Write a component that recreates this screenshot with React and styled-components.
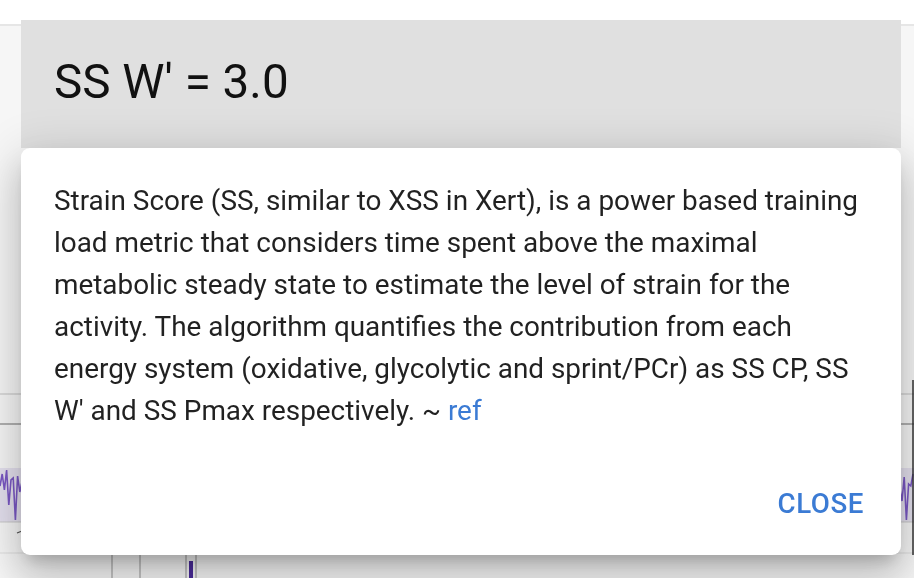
import React from "react";
import styled, { createGlobalStyle } from "styled-components";

const Global = createGlobalStyle`
  html, body { margin: 0; padding: 0; background: #ffffff; }
  body { font-family: Roboto, "Noto Sans", Arial, sans-serif; overflow: hidden; }
  #root { height: 578px; }
`;

const Page = styled.div`
  height: 578px;
  display: flex;
  flex-direction: column;
  padding-top: 24px;
  box-sizing: border-box;
`;

const Panel = styled.div`
  flex: 1;
  background: #f6f6f6;
  border-top: 2px solid #e6e6e6;
  display: flex;
  flex-direction: column;
`;

const ChartSvg = styled.svg`
  display: block;
  width: 100%;
  flex: 1;
`;

const Overlay = styled.div`
  position: fixed;
  left: 21px;
  top: 20px;
  width: 880px;
  height: 535px;
  display: flex;
  flex-direction: column;
`;

const Title = styled.div`
  height: 128px;
  flex: none;
  background: #e0e0e0;
  display: flex;
  align-items: center;
  padding: 0 33px 4px;
  box-sizing: border-box;
  font-size: 47.6px;
  font-weight: 400;
  color: #111;
  letter-spacing: 0;
`;

const Card = styled.div`
  position: relative;
  z-index: 1;
  flex: 1;
  background: #ffffff;
  border-radius: 9px;
  box-shadow: 0 11px 15px -7px rgba(0, 0, 0, 0.2),
    0 24px 38px 3px rgba(0, 0, 0, 0.14),
    0 9px 46px 8px rgba(0, 0, 0, 0.12);
  display: flex;
  flex-direction: column;
  padding: 32px 33px 27px;
  box-sizing: border-box;
`;

const Body = styled.p`
  margin: 0;
  font-size: 27.9px;
  line-height: 42px;
  color: rgba(0, 0, 0, 0.87);
  flex: 1;
`;

const Link = styled.a`
  color: #3b7bd4;
  text-decoration: none;
`;

const Actions = styled.div`
  display: flex;
  justify-content: flex-end;
`;

const CloseButton = styled.button`
  background: none;
  border: none;
  padding: 8px 4px 8px 5px;
  font-family: Roboto, "Noto Sans", Arial, sans-serif;
  font-weight: 500;
  font-size: 27.7px;
  letter-spacing: 0.02em;
  color: #3b7bd4;
  text-transform: uppercase;
  cursor: pointer;
`;

function Chart() {
  const wave = [];
  let x = 0;
  const seed = [486, 474, 490, 470, 505, 480, 478, 520, 476, 492, 482, 515, 473, 488, 501, 477, 520, 484];
  let i = 0;
  while (x <= 914) {
    wave.push(`${x},${seed[i % seed.length]}`);
    x += 2.2;
    i++;
  }
  return (
    <ChartSvg viewBox="0 26 914 552" preserveAspectRatio="none">
      <line x1="0" y1="394" x2="914" y2="394" stroke="#d2d2d2" strokeWidth="1.5" />
      <line x1="0" y1="424" x2="914" y2="424" stroke="#9a9a9a" strokeWidth="1.5" />
      <rect x="0" y="468" width="914" height="54" fill="#e4e0ee" />
      <polyline points={wave.join(" ")} fill="none" stroke="#7a58c4" strokeWidth="1.6" />
      <line x1="0" y1="522" x2="914" y2="522" stroke="#c9c9c9" strokeWidth="1" />
      <line x1="17" y1="533" x2="22" y2="531" stroke="#555" strokeWidth="1.2" />
      <line x1="0" y1="553" x2="914" y2="553" stroke="#dcdcdc" strokeWidth="1" />
      <line x1="112" y1="553" x2="112" y2="578" stroke="#b5b5b5" strokeWidth="1.5" />
      <line x1="140" y1="553" x2="140" y2="578" stroke="#b5b5b5" strokeWidth="1.5" />
      <line x1="186" y1="553" x2="186" y2="578" stroke="#b5b5b5" strokeWidth="1.5" />
      <line x1="196" y1="553" x2="196" y2="578" stroke="#b5b5b5" strokeWidth="1.5" />
      <rect x="189" y="561" width="4" height="17" fill="#4a2a9a" />
      <line x1="913" y1="380" x2="913" y2="555" stroke="#333" strokeWidth="1.5" />
    </ChartSvg>
  );
}

export default function App() {
  return (
    <>
      <Global />
      <Page>
        <Panel>
          <Chart />
        </Panel>
      </Page>
      <Overlay role="dialog">
        <Title>SS W' = 3.0</Title>
        <Card>
          <Body>
            Strain Score (SS, similar to XSS in Xert), is a power based training load metric that
            considers time spent above the maximal metabolic steady state to estimate the level of
            strain for the activity. The algorithm quantifies the contribution from each energy
            system (oxidative, glycolytic and sprint/PCr) as SS CP, SS W' and SS Pmax respectively.
            ~ <Link href="#">ref</Link>
          </Body>
          <Actions>
            <CloseButton>Close</CloseButton>
          </Actions>
        </Card>
      </Overlay>
    </>
  );
}
